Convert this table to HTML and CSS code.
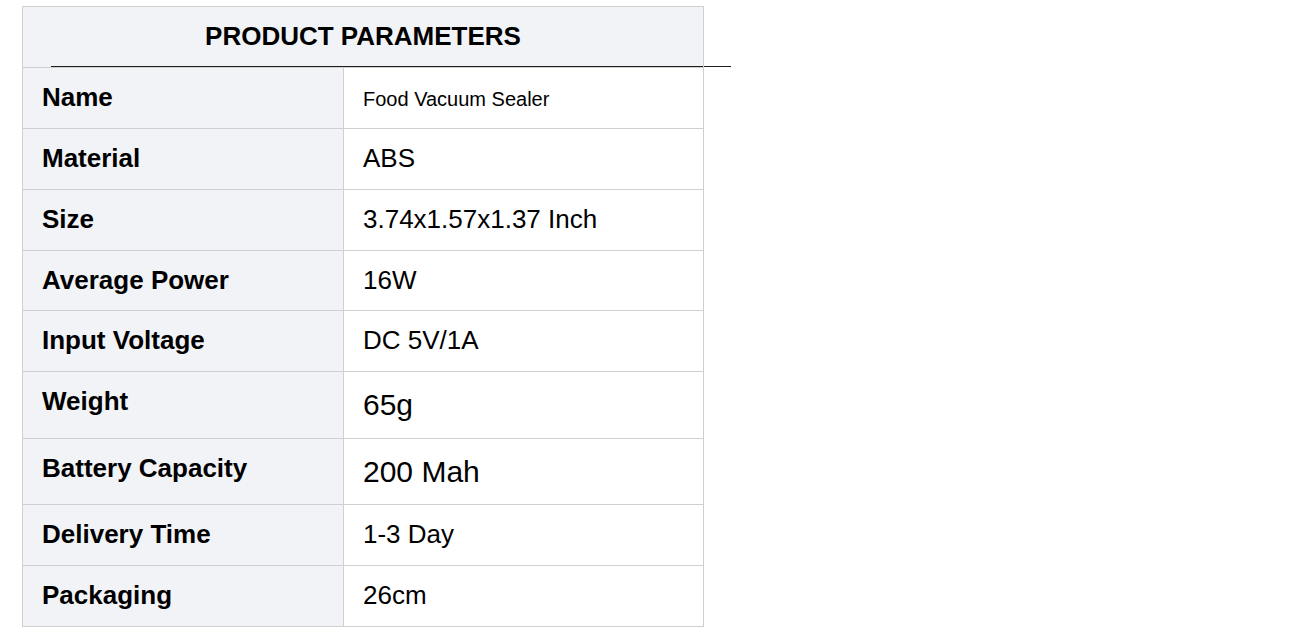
FILE: index.html
```html
<!DOCTYPE html>
<html lang="en">
<head>
<meta charset="utf-8">
<title>Product Parameters</title>
<link rel="stylesheet" href="styles.css">
</head>
<body>
<div class="page">
  <table class="params">
    <colgroup>
      <col class="col-label">
      <col class="col-value">
    </colgroup>
    <thead>
      <tr>
        <th class="params-head" colspan="2">
          <div class="params-title">PRODUCT PARAMETERS</div>
          <div class="params-rule"></div>
        </th>
      </tr>
    </thead>
    <tbody>
      <tr><th class="label">Name</th><td class="value"><span class="v-sm">Food Vacuum Sealer</span></td></tr>
      <tr><th class="label">Material</th><td class="value">ABS</td></tr>
      <tr><th class="label">Size</th><td class="value">3.74x1.57x1.37 Inch</td></tr>
      <tr><th class="label">Average Power</th><td class="value">16W</td></tr>
      <tr><th class="label">Input Voltage</th><td class="value">DC 5V/1A</td></tr>
      <tr><th class="label">Weight</th><td class="value"><span class="v-lg">65g</span></td></tr>
      <tr><th class="label">Battery Capacity</th><td class="value"><span class="v-lg">200 Mah</span></td></tr>
      <tr><th class="label">Delivery Time</th><td class="value">1-3 Day</td></tr>
      <tr><th class="label">Packaging</th><td class="value">26cm</td></tr>
    </tbody>
  </table>
</div>
</body>
</html>
```

FILE: styles.css
```css
html, body {
  margin: 0;
  padding: 0;
  background: #ffffff;
}

body {
  font-family: "Liberation Sans", Arial, sans-serif;
  color: #000000;
}

.page {
  padding: 6px 0 0 22px;
}

.params {
  border-collapse: collapse;
  table-layout: fixed;
  width: 681px;
  border: 1px solid #cfcfcf;
  font-size: 26px;
  line-height: 1.15;
}

.col-label {
  width: 321px;
}

.col-value {
  width: 360px;
}

.params th,
.params td {
  border: 1px solid #cfcfcf;
  vertical-align: top;
  text-align: left;
  padding: 15px 18px 15px 19px;
}

.params .params-head {
  background: #f2f3f7;
  padding: 0;
  text-align: center;
  font-weight: bold;
}

.params-title {
  padding: 15px 0 14px;
  text-align: center;
}

.params-rule {
  margin-left: 28px;
  width: 680px;
  border-top: 1px solid #1e1e1e;
}

.params .label {
  background: #f2f3f7;
  font-weight: bold;
}

.params .value {
  background: #ffffff;
  font-weight: normal;
}

.v-sm {
  font-size: 20px;
}

.v-lg {
  font-size: 30px;
  line-height: 35.5px;
}
```
